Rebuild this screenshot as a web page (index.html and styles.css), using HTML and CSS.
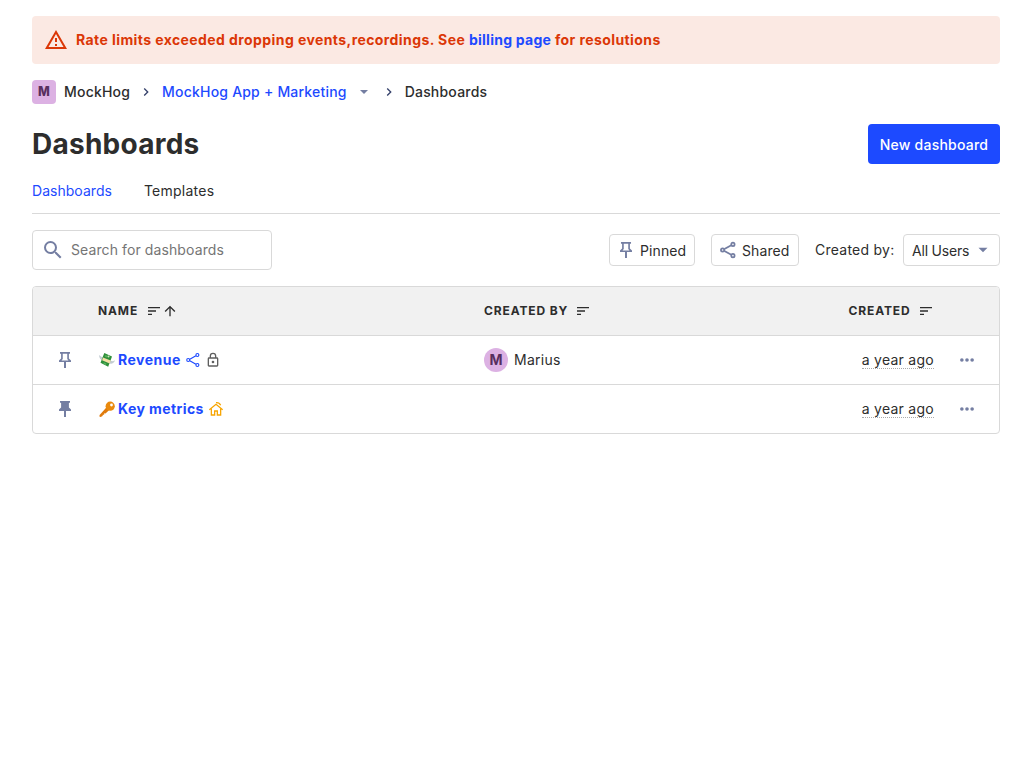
FILE: index.html
```
<!DOCTYPE html>
<html lang="en">
<head>
<meta charset="utf-8">
<title>Dashboards</title>
<link rel="stylesheet" href="styles.css">
</head>
<body>
<svg class="defs" width="0" height="0" aria-hidden="true">
  <symbol id="chevron" viewBox="0 0 24 24"><path d="M8.6 16.6 13.2 12 8.6 7.4 10 6l6 6-6 6z"/></symbol>
  <symbol id="drop" viewBox="0 0 24 24"><path d="m6 9 6 6 6-6z"/></symbol>
  <symbol id="pin" viewBox="0 0 24 24"><path fill-rule="evenodd" d="M5.300 1.300h13.400v2.200h-1.500V10l2.800 2.700v2.100h-6.700v7.900h-2.600v-7.900H4v-2.100L6.800 10V3.500H5.300zM9 3.500v7.300l-1.600 1.900h9.200L15 10.800V3.500z"/></symbol>
  <symbol id="pin-filled" viewBox="0 0 24 24"><path d="M5.300 1.300h13.400v2.200h-1.500V10l2.800 2.700v2.100h-6.700v7.900h-2.600v-7.900H4v-2.100L6.800 10V3.500H5.300z"/></symbol>
  <symbol id="share" viewBox="0 0 24 24"><g fill="none" stroke="currentColor"><path d="m7.200 10.800 9.200-5.200M7.200 13.200l9.200 5.200"/><circle cx="4.800" cy="12" r="2.200"/><circle cx="18.600" cy="4.500" r="2.200"/><circle cx="18.600" cy="19.500" r="2.200"/></g></symbol>
  <symbol id="sort" viewBox="0 0 24 24"><path d="M3 18h6v-2H3zM3 6v2h18V6zm0 7h12v-2H3z"/></symbol>
  <symbol id="dots" viewBox="0 0 24 24"><circle cx="4.300" cy="12" r="2.700"/><circle cx="12" cy="12" r="2.700"/><circle cx="19.700" cy="12" r="2.700"/></symbol>
</svg>
<main class="page">
  <div class="banner">
    <svg class="banner-icon" viewBox="0 0 24 24"><path d="M12 5.990 19.530 19H4.470L12 5.990M12 2 1 21h22zm1 14h-2v2h2zm0-6h-2v4h2z"/></svg>
    <div>Rate limits exceeded dropping events,recordings. See <a class="link billing">billing page</a> for resolutions</div>
  </div>
  <nav class="crumbs">
    <span class="lettermark">M</span>
    <span class="crumb">MockHog</span>
    <svg class="crumb-sep" viewBox="0 0 24 24"><use href="#chevron"/></svg>
    <a class="link">MockHog App + Marketing</a>
    <svg class="crumb-drop" viewBox="0 0 24 24"><use href="#drop"/></svg>
    <svg class="crumb-sep crumb-sep-last" viewBox="0 0 24 24"><use href="#chevron"/></svg>
    <span>Dashboards</span>
  </nav>
  <header class="title-bar">
    <h1 class="title">Dashboards</h1>
    <button class="primary">New dashboard</button>
  </header>
  <div class="tabs"><a class="tab tab-active">Dashboards</a><a class="tab tab-other">Templates</a></div>
  <div class="filters">
    <label class="search">
      <svg class="search-icon" viewBox="0 0 24 24"><path d="M15.500 14h-.790l-.280-.270A6.471 6.471 0 0 0 16 9.500 6.500 6.500 0 1 0 9.500 16c1.610 0 3.090-.590 4.230-1.570l.270.280v.790l5 4.990L20.490 19zm-6 0C7.010 14 5 11.990 5 9.500S7.010 5 9.500 5 14 7.010 14 9.500 11.990 14 9.500 14z"/></svg>
      <input class="search-input" placeholder="Search for dashboards">
    </label>
    <div class="filter-group">
      <button class="small-button pinned"><svg class="icon18" viewBox="0 0 24 24"><use href="#pin"/></svg>Pinned</button>
      <button class="small-button shared"><svg class="icon18" viewBox="0 0 24 24"><use href="#share"/></svg>Shared</button>
      <div class="creator">Created by:<button class="small-button select">All Users<svg class="icon18" viewBox="0 0 24 24"><use href="#drop"/></svg></button></div>
    </div>
  </div>
  <section class="table">
    <div class="row head">
      <div></div>
      <div class="head-cell">Name<svg class="sort" viewBox="0 0 24 24"><use href="#sort"/></svg><svg class="arrow" viewBox="0 0 24 24"><path d="m4 12 1.410 1.410L11 7.830V20h2V7.830l5.580 5.590L20 12l-8-8z"/></svg></div>
      <div class="head-cell">Created by<svg class="sort sort-creator" viewBox="0 0 24 24"><use href="#sort"/></svg></div>
      <div class="head-cell right">Created<svg class="sort" viewBox="0 0 24 24"><use href="#sort"/></svg></div>
      <div></div>
    </div>
    <div class="row">
      <div class="pin-cell"><svg class="icon18" viewBox="0 0 24 24"><use href="#pin"/></svg></div>
      <div class="name">
        <svg class="emoji" viewBox="0 0 16 16"><path fill="#c3ccd2" d="M0 3 2 4.600l3 1.400-1 2.500C1.500 8 .2 6 0 3zM16 8.300l-2 1-2.500-.500-1.500 2.500c2.500 1 5.200 0 6-3z"/><path fill="#2f8f3a" d="m5.300 1 7.700 3.400-3.800 10.300-7.700-4z"/><path fill="#56b35c" d="m6.500 3 2.200.9-.8 1.600-2.200-1zM4.700 10.200l2.800 1.400-.6 1.300-2.600-1.300z"/><path fill="#f5dfa5" d="m4 5.600 7.700 2.900-1 3-7.600-3.200z"/><circle cx="9.500" cy="4.500" r="1" fill="#c9e7b5"/></svg>
        <a class="link">Revenue</a><svg class="mini share-mini" viewBox="0 0 24 24"><use href="#share"/></svg><svg class="mini lock" viewBox="0 0 24 24"><path d="M18 8h-1V6A5 5 0 0 0 7 6v2H6a2 2 0 0 0-2 2v10c0 1.100.900 2 2 2h12a2 2 0 0 0 2-2V10a2 2 0 0 0-2-2zM9 6a3 3 0 0 1 6 0v2H9zm9 14H6V10h12zm-6-3a2 2 0 1 0 0-4 2 2 0 0 0 0 4z"/></svg></div>
      <div class="person"><span class="avatar">M</span>Marius</div>
      <div class="date-cell"><span class="date">a year ago</span></div>
      <div class="more"><svg class="icon16" viewBox="0 0 24 24"><use href="#dots"/></svg></div>
    </div>
    <div class="row">
      <div class="pin-cell"><svg class="icon18" viewBox="0 0 24 24"><use href="#pin-filled"/></svg></div>
      <div class="name">
        <svg class="emoji" viewBox="0 0 16 16"><path fill="#e07b0c" d="m7.800 6 2.700 2.700-4 3.800-1.200-.2-.2 1.400-1.300.1-.2 1.200-2 .9-1.200-.3.200-1.600z"/><circle cx="11.200" cy="5.200" r="4.600" fill="#ea8a0d"/><circle cx="12.500" cy="4" r="1.400" fill="#fff"/></svg>
        <a class="link key-link">Key metrics</a><svg class="mini home" viewBox="0 0 24 24"><path fill="none" stroke="currentColor" stroke-width="1.900" d="M2 13 12 5l10 8M5 11.500V21h5v-6h4v6h5v-9.500M12 2.500q5-.5 7 4"/></svg></div>
      <div></div>
      <div class="date-cell"><span class="date">a year ago</span></div>
      <div class="more"><svg class="icon16" viewBox="0 0 24 24"><use href="#dots"/></svg></div>
    </div>
  </section>
</main>
</body>
</html>
```
FILE: styles.css
```
* { box-sizing: border-box; }
body { margin: 0; background: #fff; color: #2d2d2d; font: 14px/20px Inter, sans-serif; }
svg { display: block; flex: none; fill: currentColor; }
.defs { position: absolute; }
button, input { font: inherit; color: inherit; }
.page { padding: 16px 32px; }
.link { color: #1d4aff; }
.banner { display: flex; align-items: center; gap: 8px; height: 48px; padding: 0 12px; border-radius: 4px; background: #fbe9e3; color: #db3707; font-weight: 700; letter-spacing: .415px; }
.billing { letter-spacing: .26px; }
.banner-icon { width: 24px; height: 24px; }
.crumbs { display: flex; align-items: center; height: 24px; margin-top: 16px; font-weight: 500; letter-spacing: .2px; }
.lettermark, .avatar { display: flex; align-items: center; justify-content: center; width: 24px; height: 24px; background: #dcb1e3; color: #572e5e; font-weight: 700; letter-spacing: 0; }
.lettermark { border-radius: 4px; font-size: 12.5px; font-weight: 800; }
.crumb { margin-left: 8px; }
.crumb-sep { width: 16px; height: 16px; margin: 0 8px; color: #35416b; }
.crumb-drop { width: 16px; height: 16px; margin-left: 9px; color: #747ea2; }
.crumb-sep-last { margin-left: 9px; }
.title-bar { display: flex; align-items: center; justify-content: space-between; height: 40px; margin-top: 20px; }
.title { margin: 0; font-size: 28px; line-height: 40px; font-weight: 700; letter-spacing: .25px; }
.primary { width: 132px; height: 40px; padding: 2px 0 0; border: 0; border-radius: 4px; background: #1d4aff; color: #fff; font-weight: 500; letter-spacing: .23px; }
.tabs { display: flex; gap: 32px; height: 50px; padding-top: 17px; border-bottom: 1px solid #d9d9d9; }
.tab-active { color: #1d4aff; letter-spacing: .03px; }
.tab-other { letter-spacing: .25px; }
.filters { display: flex; justify-content: space-between; align-items: center; height: 40px; margin-top: 16px; }
.search { display: flex; align-items: center; gap: 6px; width: 240px; height: 40px; padding: 0 8px; border: 1px solid #d9d9d9; border-radius: 4px; }
.search-icon { width: 24px; height: 24px; color: #747ea2; }
.search-input { flex: 1; min-width: 0; padding: 0; border: 0; outline: 0; background: none; letter-spacing: .1px; }
.search-input::placeholder { color: #757575; }
.filter-group { display: flex; align-items: center; gap: 16px; }
.small-button { display: flex; align-items: center; gap: 5px; height: 32px; padding: 2px 0 0 7px; border: 1px solid #d9d9d9; border-radius: 4px; background: #fff; letter-spacing: .1px; white-space: nowrap; }
.small-button svg { margin-top: -2px; color: #747ea2; stroke-width: 2.300px; }
.pinned { width: 86px; }
.shared { width: 88px; }
.creator { display: flex; align-items: center; justify-content: space-between; width: 185px; letter-spacing: .25px; }
.select { width: 97px; padding-left: 8px; letter-spacing: -.2px; }
.icon18 { width: 18px; height: 18px; }
.icon16 { width: 16px; height: 16px; }
.table { margin-top: 16px; border: 1px solid #d9d9d9; border-radius: 4px; overflow: hidden; }
.row { display: grid; grid-template-columns: 65px 386px 300px 150px 65px; align-items: center; height: 49px; border-top: 1px solid #d9d9d9; }
.head { height: 48px; border-top: 0; background: #f1f1f1; }
.head-cell { display: flex; align-items: center; font-size: 12px; font-weight: 700; letter-spacing: .87px; text-transform: uppercase; }
.right { justify-content: flex-end; }
.sort { width: 16px; height: 16px; margin-left: 7.5px; }
.sort-creator { margin-left: 6.5px; }
.arrow { width: 16px; height: 16px; }
.pin-cell { padding-left: 23px; color: #747ea2; }
.name { display: flex; align-items: center; font-weight: 700; letter-spacing: .5px; }
.key-link { letter-spacing: .42px; }
.emoji { width: 16px; height: 16px; margin: 0 3.500px 0 .500px; }
.mini { width: 16px; height: 16px; margin-left: 4px; }
.share-mini { color: #1d4aff; stroke-width: 1.700px; }
.lock { color: #5f5f5f; }
.home { color: #f7a501; }
.person { display: flex; align-items: center; gap: 6px; letter-spacing: .25px; }
.avatar { border-radius: 50%; }
.date-cell { display: flex; justify-content: flex-end; }
.date { height: 19px; margin-top: -2px; border-bottom: 1px dotted #aaa; letter-spacing: .27px; }
.more { padding-left: 25px; color: #747ea2; }
```
